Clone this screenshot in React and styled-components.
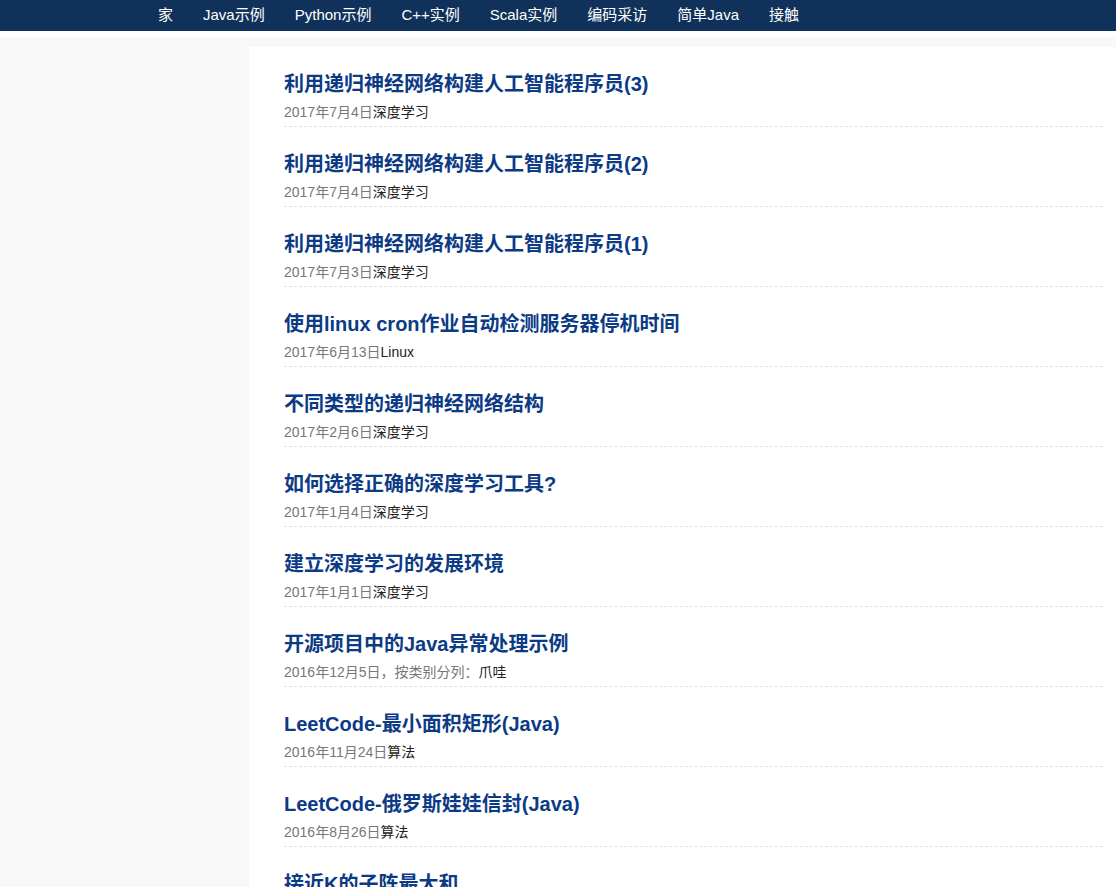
import React from 'react';
import styled, { createGlobalStyle } from 'styled-components';

const GlobalStyle = createGlobalStyle`
  html, body {
    margin: 0;
    padding: 0;
    background: #fff;
    font-family: "Liberation Sans", "Noto Sans CJK SC", sans-serif;
  }
`;

const navLinks = ['家', 'Java示例', 'Python示例', 'C++实例', 'Scala实例', '编码采访', '简单Java', '接触'];

const posts = [
  { title: '利用递归神经网络构建人工智能程序员(3)', date: '2017年7月4日', cat: '深度学习' },
  { title: '利用递归神经网络构建人工智能程序员(2)', date: '2017年7月4日', cat: '深度学习' },
  { title: '利用递归神经网络构建人工智能程序员(1)', date: '2017年7月3日', cat: '深度学习' },
  { title: '使用linux cron作业自动检测服务器停机时间', date: '2017年6月13日', cat: 'Linux' },
  { title: '不同类型的递归神经网络结构', date: '2017年2月6日', cat: '深度学习' },
  { title: '如何选择正确的深度学习工具?', date: '2017年1月4日', cat: '深度学习' },
  { title: '建立深度学习的发展环境', date: '2017年1月1日', cat: '深度学习' },
  { title: '开源项目中的Java异常处理示例', date: '2016年12月5日，按类别分列：', cat: '爪哇' },
  { title: 'LeetCode-最小面积矩形(Java)', date: '2016年11月24日', cat: '算法' },
  { title: 'LeetCode-俄罗斯娃娃信封(Java)', date: '2016年8月26日', cat: '算法' },
  { title: '接近K的子阵最大和', date: '2016年8月20日', cat: '算法' }
];

// Styles
const NavBar = styled.nav`
  height: 31px;
  background: #10325a;
  display: flex;
  align-items: center;
  padding-left: 143px;
`;

const NavLink = styled.a`
  color: #fff;
  font-size: 15px;
  line-height: 28px;
  padding: 0 15px;
  text-decoration: none;
  margin-top: -2px;
`;

const Wrapper = styled.div`
  margin-top: 6px;
  background: #f8f8f8;
  padding: 10px 0 0 249px;
  height: 850px;
  overflow: hidden;
`;

const Main = styled.main`
  background: #fff;
  padding: 22px 13px 0 35px;
  height: 100%;
`;

const Post = styled.article`
  padding-bottom: 4px;
  border-bottom: 1px dashed #e3e3e3;
  margin-bottom: 22px;
`;

const Title = styled.h2`
  margin: 0 0 3px;
  font-size: 20px;
  line-height: 30px;
  font-weight: bold;
  color: #0c3b86;
`;

const Meta = styled.div`
  font-size: 14px;
  line-height: 20px;
  color: #777;

  a {
    color: #222;
    text-decoration: none;
  }
`;

export default function App() {
  return (
    <>
      <GlobalStyle />
      <NavBar>
        {navLinks.map((l) => (
          <NavLink key={l} href="#">{l}</NavLink>
        ))}
      </NavBar>
      <Wrapper>
        <Main>
          {posts.map((p) => (
            <Post key={p.title}>
              <Title>{p.title}</Title>
              <Meta>
                {p.date}
                <a href="#">{p.cat}</a>
              </Meta>
            </Post>
          ))}
        </Main>
      </Wrapper>
    </>
  );
}
